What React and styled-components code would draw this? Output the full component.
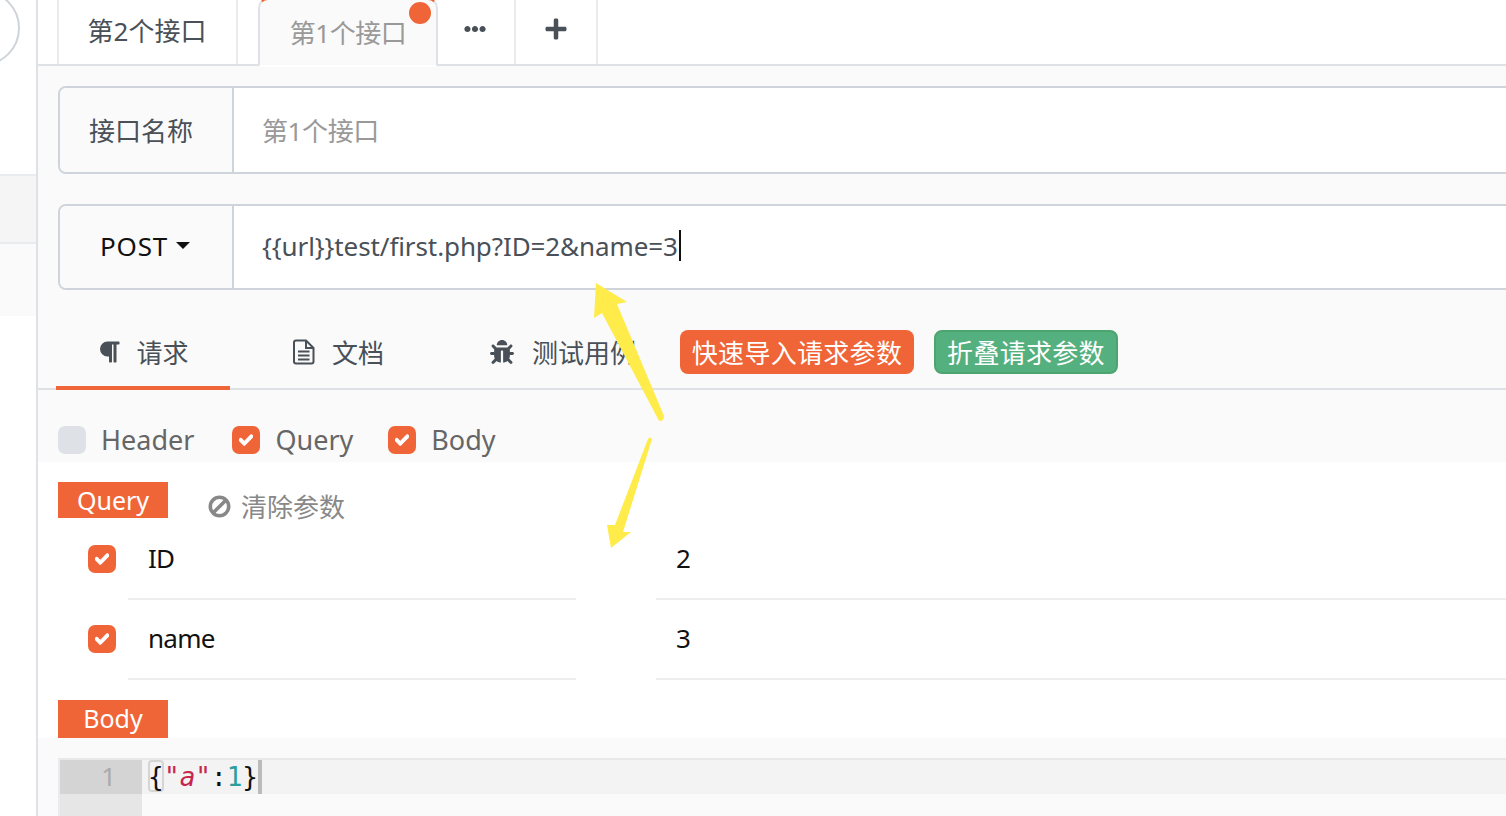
import styled, { createGlobalStyle } from "styled-components";
import { FaParagraph, FaBug, FaCheck, FaEllipsisH, FaPlus } from "react-icons/fa";

const ORANGE = "#f06538";
const FONT = '"Noto Sans", "Noto Sans CJK SC", sans-serif';

const GlobalStyle = createGlobalStyle`
  html, body {
    margin: 0;
    padding: 0;
    background: #fff;
    overflow: hidden;
  }
  * {
    box-sizing: border-box;
  }
`;

function Check({ on = true }) {
  return <CheckBox $on={on}>{on && <FaCheck />}</CheckBox>;
}

function ParamRow({ name, value }) {
  return (
    <ParamLine>
      <ParamCheck>
        <Check />
      </ParamCheck>
      <ParamName>{name}</ParamName>
      <ParamValue>{value}</ParamValue>
    </ParamLine>
  );
}

function FileIcon() {
  return (
    <svg width="23" height="26" viewBox="0 0 23 26" fill="none" stroke="#495057" strokeWidth="2">
      <path d="M4 1.5 H14 L21.5 9 V22.5 Q21.5 24.5 19.5 24.5 H4 Q2 24.5 2 22.5 V3.5 Q2 1.5 4 1.5 Z" />
      <path d="M14 1.5 V9 H21.5" />
      <path d="M6 12.5 H17.5 M6 16.5 H17.5 M6 20.5 H17.5" />
    </svg>
  );
}

function BanIcon() {
  return (
    <svg width="23" height="23" viewBox="0 0 23 23" fill="none" stroke="#888" strokeWidth="3.6">
      <circle cx="11.5" cy="11.5" r="9.2" />
      <path d="M5.2 17.8 L17.8 5.2" />
    </svg>
  );
}

export default function App() {
  return (
    <>
      <GlobalStyle />
      <Page>
        <Sidebar>
          <Avatar />
          <SideRowActive />
          <SideRow />
        </Sidebar>
        <Main>
          <TabBar>
            <Tab>第2个接口</Tab>
            <TabActive>
              第1个接口
              <Dot />
            </TabActive>
            <ToolTab $w={78}>
              <FaEllipsisH />
            </ToolTab>
            <ToolTab $w={82} $big>
              <FaPlus />
            </ToolTab>
          </TabBar>
          <Grey>
            <FormRow $h={88}>
              <FormLabel>接口名称</FormLabel>
              <FormInput $muted>第1个接口</FormInput>
            </FormRow>
            <FormRow $h={86} $gap>
              <FormLabel $method>
                POST
                <Caret />
              </FormLabel>
              <FormInput>
                {"{{url}}test/first.php?ID=2&name=3"}
                <Cursor />
              </FormInput>
            </FormRow>
            <Nav>
              <NavItem $active $gap={15} $w={174}>
                <FaParagraph />
                请求
              </NavItem>
              <NavItem $gap={17} $w={176}>
                <FileIcon />
                文档
              </NavItem>
              <NavItem $gap={18} $w={234}>
                <FaBug />
                测试用例
              </NavItem>
              <ActionButton $w={234}>快速导入请求参数</ActionButton>
              <ActionButton $w={184} $green>折叠请求参数</ActionButton>
            </Nav>
            <CheckRow>
              <CheckLabel $mr={38}>
                <Check on={false} />
                Header
              </CheckLabel>
              <CheckLabel $mr={35}>
                <Check />
                Query
              </CheckLabel>
              <CheckLabel>
                <Check />
                Body
              </CheckLabel>
            </CheckRow>
          </Grey>
          <QuerySection>
            <QueryHead>
              <Badge $h={36}>Query</Badge>
              <ClearLink>
                <BanIcon />
                清除参数
              </ClearLink>
            </QueryHead>
            <ParamRow name="ID" value="2" />
            <ParamRow name="name" value="3" />
            <BodyBadge>Body</BodyBadge>
          </QuerySection>
          <EditorWrap>
            <Editor>
              <EditorLine>
                <LineNo>1</LineNo>
                <Code>
                  <Match>{"{"}</Match>
                  <Str>
                    "<i>a</i>"
                  </Str>
                  :<Num>1</Num>
                  {"}"}
                  <CodeCursor />
                </Code>
              </EditorLine>
              <Gutter />
            </Editor>
          </EditorWrap>
        </Main>
        <Arrows width="1506" height="816" viewBox="0 0 1506 816">
          <path
            d="M596 283 L627 302 L617 304 L664 416 Q664 421 660 421 Q658 420 657 417 L602 313 L594 318 Z"
            fill="#ffeb4a"
          />
          <path
            d="M652 439 L623 532 L631 532 L611 548 L607 525 L615 525 L648 439 Q650 436 652 439 Z"
            fill="#ffeb4a"
          />
        </Arrows>
      </Page>
    </>
  );
}

const Page = styled.div`
  position: relative;
  display: flex;
  width: 1506px;
  height: 816px;
  overflow: hidden;
  font-family: ${FONT};
  font-size: 26px;
`;

const Sidebar = styled.div`
  flex: 0 0 38px;
  border-right: 2px solid #dee2e6;
  overflow: hidden;
`;

const Avatar = styled.div`
  width: 76px;
  height: 76px;
  margin: -10px 0 0 -56px;
  border: 2px solid #ced4da;
  border-radius: 50%;
`;

const SideRowActive = styled.div`
  height: 70px;
  margin-top: 108px;
  background: #f5f5f5;
  border-top: 2px solid #e9ecef;
  border-bottom: 2px solid #e9ecef;
`;

const SideRow = styled.div`
  height: 72px;
  background: #fafafa;
`;

const Main = styled.div`
  flex: 1;
  min-width: 0;
  display: flex;
  flex-direction: column;
`;

const TabBar = styled.div`
  display: flex;
  height: 66px;
  padding-left: 19px;
  border-bottom: 2px solid #dee2e6;
`;

const Tab = styled.div`
  display: flex;
  align-items: center;
  justify-content: center;
  width: 181px;
  height: 64px;
  margin-right: 21px;
  padding: 0 1px 4px 0;
  color: #495057;
  border-left: 2px solid #e9ecef;
  border-right: 2px solid #e9ecef;
`;

const TabActive = styled.div`
  position: relative;
  display: flex;
  align-items: center;
  justify-content: center;
  width: 180px;
  height: 69px;
  margin: -2px 0 0 -1px;
  padding-bottom: 2px;
  color: #999;
  background: #fafafa;
  letter-spacing: -0.5px;
  border: 2px solid #dee2e6;
  border-top: 2px solid ${ORANGE};
  border-bottom: 2px solid #fff;
  border-radius: 10px 10px 0 0;
  z-index: 1;
`;

const Dot = styled.span`
  position: absolute;
  top: 2px;
  right: 5px;
  width: 22px;
  height: 22px;
  border-radius: 50%;
  background: ${ORANGE};
`;

const ToolTab = styled.div`
  display: flex;
  align-items: center;
  justify-content: center;
  width: ${(p) => p.$w}px;
  height: 64px;
  padding: 0 ${(p) => (p.$big ? 0 : 2)}px 6px 0;
  color: #495057;
  border-right: 2px solid #e9ecef;
  font-size: ${(p) => (p.$big ? 24 : 22)}px;
`;

const Grey = styled.div`
  background: #fafafa;
  padding-top: 20px;
  height: 396px;
`;

const FormRow = styled.div`
  display: flex;
  height: ${(p) => p.$h}px;
  margin: ${(p) => (p.$gap ? 30 : 0)}px -10px 0 20px;
  border: 2px solid #ced4da;
  border-radius: 8px;
  overflow: hidden;
`;

const FormLabel = styled.div`
  display: flex;
  align-items: center;
  justify-content: center;
  flex: 0 0 174px;
  padding: ${(p) => (p.$method ? "0 2px 3px 0" : "0 10px 0 0")};
  letter-spacing: ${(p) => (p.$method ? "0.8px" : "0")};
  background: #fafafa;
  border-right: 2px solid #ced4da;
  color: ${(p) => (p.$method ? "#111" : "#495057")};
`;

const Caret = styled.span`
  margin: -1px 0 0 8px;
  border-top: 7px solid #111;
  border-left: 7px solid transparent;
  border-right: 7px solid transparent;
`;

const FormInput = styled.div`
  display: flex;
  align-items: center;
  flex: 1;
  padding: 0 0 ${(p) => (p.$muted ? 0 : 3)}px 28px;
  background: #fff;
  letter-spacing: ${(p) => (p.$muted ? "-0.4px" : "-0.1px")};
  color: ${(p) => (p.$muted ? "#999" : "#495057")};
`;

const Cursor = styled.span`
  width: 2px;
  height: 31px;
  margin-left: 1px;
  background: #111;
`;

const Nav = styled.div`
  display: flex;
  align-items: flex-start;
  height: 100px;
  padding-left: 18px;
  border-bottom: 2px solid #dee2e6;
`;

const NavItem = styled.div`
  display: flex;
  align-items: center;
  justify-content: center;
  gap: ${(p) => p.$gap}px;
  flex: 0 0 ${(p) => p.$w}px;
  height: 74px;
  margin-top: 26px;
  padding-top: 2px;
  color: #495057;
  border-bottom: 4px solid ${(p) => (p.$active ? ORANGE : "transparent")};

  & + & {
    margin-left: 20px;
  }
  svg {
    flex: none;
  }
  > svg[width="1em"] {
    font-size: 24px;
  }
`;

const ActionButton = styled.div`
  flex: 0 0 ${(p) => p.$w}px;
  height: 44px;
  margin: 40px 20px 0 0;
  line-height: ${(p) => (p.$green ? 42 : 46)}px;
  letter-spacing: 0.3px;
  text-align: center;
  color: #fff;
  background: ${(p) => (p.$green ? "#55b07f" : ORANGE)};
  border: ${(p) => (p.$green ? "2px solid #4ca56e" : "0")};
  border-radius: 8px;
  white-space: nowrap;
`;

const CheckRow = styled.div`
  display: flex;
  padding: 36px 0 0 20px;
`;

const CheckLabel = styled.label`
  display: flex;
  align-items: flex-start;
  gap: 15px;
  height: 28px;
  margin-right: ${(p) => p.$mr || 0}px;
  line-height: 28px;
  color: #666;
  font-size: 27px;
`;

const CheckBox = styled.span`
  display: flex;
  align-items: center;
  justify-content: center;
  width: 28px;
  height: 28px;
  border-radius: 7px;
  color: #fff;
  font-size: 14px;
  background: ${(p) => (p.$on ? ORANGE : "#dee2e6")};

  svg {
    stroke: currentColor;
    stroke-width: 40px;
  }
`;

const QuerySection = styled.div`
  height: 276px;
  padding: 20px 0 0 20px;
  background: #fff;
`;

const QueryHead = styled.div`
  display: flex;
  align-items: flex-start;
  height: 38px;
`;

const Badge = styled.div`
  width: 110px;
  height: ${(p) => p.$h}px;
  line-height: ${(p) => p.$h}px;
  text-align: center;
  color: #fff;
  background: ${ORANGE};
  font-size: 25px;
`;

const BodyBadge = styled(Badge)`
  height: 38px;
  margin-top: 20px;
  line-height: 36px;
`;

const ClearLink = styled.div`
  display: flex;
  align-items: center;
  gap: 10px;
  margin: 5px 0 0 40px;
  color: #888;
`;

const ParamLine = styled.div`
  display: flex;
  height: 80px;
  margin-left: -20px;
  color: #111;
`;

const ParamCheck = styled.div`
  flex: 0 0 90px;
  padding: 25px 0 0 50px;
`;

const ParamName = styled.div`
  flex: 0 0 448px;
  margin-right: 80px;
  padding-left: 20px;
  line-height: 76px;
  letter-spacing: -0.7px;
  border-bottom: 2px solid #eee;
`;

const ParamValue = styled.div`
  flex: 1;
  padding-left: 20px;
  line-height: 76px;
  border-bottom: 2px solid #eee;
`;

const EditorWrap = styled.div`
  flex: 1;
  padding: 20px 0 0 20px;
  background: #fafafa;
`;

const Editor = styled.div`
  height: 100%;
  border-top: 2px solid #e9e9e9;
  border-left: 2px solid #e8ecf0;
`;

const EditorLine = styled.div`
  display: flex;
  height: 34px;
  background: #f3f3f3;
`;

const LineNo = styled.div`
  flex: 0 0 82px;
  padding-right: 26px;
  line-height: 32px;
  text-align: right;
  color: #aaa;
  background: #d4d4d4;
`;

const Code = styled.div`
  display: flex;
  margin-left: 6px;
  line-height: 34px;
  color: #111;
  font-family: "DejaVu Sans Mono", monospace;
  font-size: 26px;
`;

const Match = styled.span`
  width: 16px;
  height: 32px;
  border: 2px solid #d5d5d5;
  border-radius: 4px;
  line-height: 30px;
  text-indent: -2px;
`;

const Str = styled.span`
  color: #c7254e;
`;

const Num = styled.span`
  color: #2a9d9d;
`;

const CodeCursor = styled.span`
  width: 4px;
  height: 34px;
  background: #bbb;
`;

const Gutter = styled.div`
  width: 82px;
  height: 100%;
  background: #e6e6e6;
`;

const Arrows = styled.svg`
  position: absolute;
  top: 0;
  left: 0;
  pointer-events: none;
  z-index: 2;
`;
